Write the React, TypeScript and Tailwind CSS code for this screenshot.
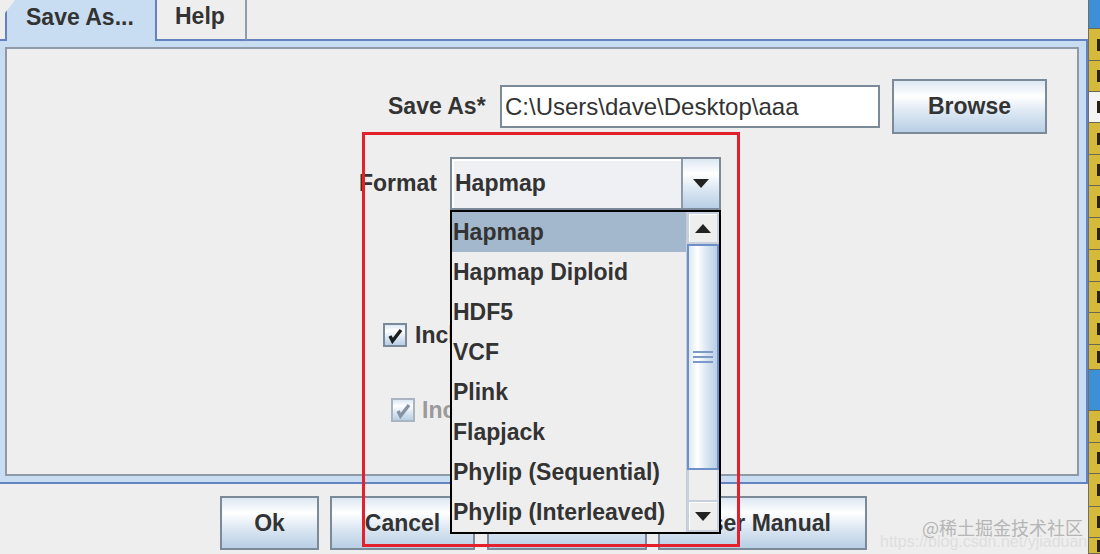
import React from "react";

// Java Swing "Ocean" look: grey window, blue-ish gradients, grey borders
const FONT = "[font-family:'Liberation_Sans',Arial,sans-serif]";
const BTN_BG =
  "bg-[linear-gradient(to_bottom,#dde8f3_0%,#ffffff_30%,#dde8f3_60%,#b8cfe5_100%)]";
const THUMB_BG =
  "bg-[linear-gradient(to_right,#dde8f3_0%,#ffffff_30%,#dde8f3_60%,#b8cfe5_100%)]";

const formats = [
  "Hapmap",
  "Hapmap Diploid",
  "HDF5",
  "VCF",
  "Plink",
  "Flapjack",
  "Phylip (Sequential)",
  "Phylip (Interleaved)",
];

// strip cells at the right edge: [height incl. divider, colour]
const stripCells: [number, string][] = [
  [29, "bg-[#3d8fd6]"],
  [32, "bg-[#d4b93b]"],
  [31, "bg-[#d4b93b]"],
  [31, "bg-[#f4f4f4]"],
  [32, "bg-[#d4b93b]"],
  [31, "bg-[#d4b93b]"],
  [32, "bg-[#d4b93b]"],
  [32, "bg-[#d4b93b]"],
  [32, "bg-[#d4b93b]"],
  [31, "bg-[#d4b93b]"],
  [32, "bg-[#d4b93b]"],
  [25, "bg-[#d4b93b]"],
  [41, "bg-[#3d8fd6]"],
  [32, "bg-[#d4b93b]"],
  [31, "bg-[#d4b93b]"],
  [33, "bg-[#d4b93b]"],
  [31, "bg-[#d4b93b]"],
  [16, "bg-[#d4b93b]"],
];

const Arrow = ({ up }: { up?: boolean }) => (
  <svg width="16" height="9" viewBox="0 0 16 9">
    <polygon
      points={up ? "0,9 16,9 8,0" : "0,0 16,0 8,9"}
      fill="#222222"
    />
  </svg>
);

const JButton = ({
  className,
  children,
}: {
  className: string;
  children?: React.ReactNode;
}) => (
  <div
    className={`${className} border-2 border-[#7a8a99] ${BTN_BG} flex items-center justify-center text-[23px] font-bold text-[#333333]`}
  >
    {children}
  </div>
);

const CheckBox = ({ disabled }: { disabled?: boolean }) => (
  <div
    className={`w-[24px] h-[24px] border-2 ${
      disabled ? "border-[#a9b4c0]" : "border-[#7a8a99]"
    } ${BTN_BG} flex items-center justify-center`}
  >
    <svg width="18" height="18" viewBox="0 0 18 18">
      <polyline
        points="4,10 6.5,15 15,4"
        fill="none"
        stroke={disabled ? "#8593a5" : "#1e1e1e"}
        strokeWidth="3.4"
      />
    </svg>
  </div>
);

export default function App() {
  return (
    <div
      className={`relative w-[1100px] h-[554px] overflow-hidden bg-[#eeeeee] flex ${FONT}`}
    >
      {/* main dialog */}
      <div className="w-[1088px] flex flex-col">
        {/* tabs */}
        <div className="h-[41px] flex">
          <div className="w-[5px] border-b-2 border-[#6382bf]" />
          <div className="w-[152px] h-full bg-[#c8ddf2] border-l-2 border-r-2 border-[#6382bf] [clip-path:polygon(10px_0,100%_0,100%_100%,0_100%,0_13px)] flex items-center pl-[19px] pb-[6px] text-[23px] font-bold text-[#333333]">
            Save As...
          </div>
          <div className="w-[90px] h-full border-r-2 border-r-[#8e9cab] border-b-2 border-b-[#6382bf] [clip-path:polygon(11px_0,100%_0,100%_100%,0_100%,0_7px)] flex items-center pl-[18px] pb-[6px] text-[23px] font-bold text-[#333333]">
            Help
          </div>
          <div className="flex-1 border-b-2 border-[#6382bf]" />
        </div>

        {/* tab content */}
        <div className="h-[443px] bg-[#c8ddf2] border-r-2 border-b-2 border-[#6382bf] pt-[6px] pb-[6px] pl-[5px] pr-[7px]">
          <div className="h-full border-2 border-[#8f9aa8] bg-[#eeeeee] flex flex-col">
            {/* Save As row */}
            <div className="mt-[30px] h-[55px] flex items-center pl-[381px]">
              <div className="w-[100px] text-[23px] font-bold text-[#333333] whitespace-nowrap">
                Save As*
              </div>
              <div className="ml-[12px] w-[380px] h-[43px] border-2 border-[#7a8a99] bg-white flex items-center pl-[3px] text-[24px] text-[#333333] whitespace-nowrap">
                C:\Users\dave\Desktop\aaa
              </div>
              <JButton className="ml-[12px] w-[155px] h-[55px]">Browse</JButton>
            </div>

            {/* Format row */}
            <div className="mt-[23px] h-[53px] flex items-center pl-[352px]">
              <div className="w-[79px] text-[23px] font-bold text-[#333333]">
                Format
              </div>
              <div className="ml-[12px] w-[271px] h-[53px] border-2 border-[#7a8a99] flex">
                <div className="flex-1 bg-[#eef0f3] shadow-[inset_2px_2px_0_#ffffff] flex items-center pl-[3px] text-[23px] font-bold text-[#333333]">
                  Hapmap
                </div>
                <div
                  className={`w-[38px] border-l-2 border-[#8f9aa8] ${BTN_BG} flex items-center justify-center`}
                >
                  <Arrow />
                </div>
              </div>
            </div>

            {/* checkboxes, labels run under the open popup */}
            <div className="mt-[113px] h-[24px] flex items-center pl-[376px]">
              <CheckBox />
              <div className="ml-[8px] w-[35px] overflow-hidden text-[23px] font-bold text-[#333333] whitespace-nowrap">
                Include Taxa Annotations
              </div>
            </div>
            <div className="mt-[51px] h-[24px] flex items-center pl-[384px]">
              <CheckBox disabled />
              <div className="ml-[7px] w-[28px] overflow-hidden text-[23px] font-bold text-[#9a9a9a] whitespace-nowrap">
                Include Depth
              </div>
            </div>
          </div>
        </div>

        {/* bottom buttons */}
        <div className="mt-[12px] h-[54px] flex pl-[220px]">
          <JButton className="w-[99px] h-[54px]">Ok</JButton>
          <JButton className="ml-[11px] w-[145px] h-[54px]">Cancel</JButton>
          <JButton className="ml-[12px] w-[160px] h-[54px]" />
          <JButton className="ml-[11px] w-[209px] h-[54px]">User Manual</JButton>
        </div>
      </div>

      {/* table edge peeking in on the right */}
      <div className="w-[12px] border-l border-[#6f6f6f] flex flex-col">
        {stripCells.map(([h, c], i) => (
          <div
            key={i}
            className={`${c} border-b border-[#6b6852] flex items-center justify-end shrink-0`}
            style={{ height: h }}
          >
            {c !== "bg-[#3d8fd6]" && (
              <div className="w-[3px] h-[12px] bg-[#2a2418]" />
            )}
          </div>
        ))}
      </div>

      {/* open combo popup */}
      <div className="absolute left-[450px] top-[210px] w-[271px] h-[324px] border-2 border-black bg-[#eeeeee] flex">
        <div className="w-[234px] flex flex-col">
          {formats.map((f, i) => (
            <div
              key={f}
              className={`h-[40px] shrink-0 flex items-center pl-[1px] text-[23px] font-bold text-[#333333] whitespace-nowrap ${
                i === 0 ? "bg-[#a3b8cc]" : ""
              }`}
            >
              {f}
            </div>
          ))}
        </div>
        <div className="w-[33px] flex flex-col border-l border-[#c3ccd8]">
          <div className="h-[32px] border-2 border-[#c7d0dc] shadow-[inset_1px_1px_0_#ffffff] flex items-center justify-center">
            <Arrow up />
          </div>
          <div
            className={`h-[226px] border-2 border-[#6f8fc9] ${THUMB_BG} flex flex-col items-center justify-center gap-[3px]`}
          >
            <div className="w-[20px] h-[2px] bg-[#7d99c8]" />
            <div className="w-[20px] h-[2px] bg-[#7d99c8]" />
            <div className="w-[20px] h-[2px] bg-[#7d99c8]" />
          </div>
          <div className="h-[30px] border-x-2 border-[#c7d0dc] bg-[#eeeeee]" />
          <div className="h-[32px] border-2 border-[#c7d0dc] shadow-[inset_1px_1px_0_#ffffff] flex items-center justify-center">
            <Arrow />
          </div>
        </div>
      </div>

      {/* red highlight frame */}
      <div className="absolute left-[362px] top-[132px] w-[378px] h-[415px] border-[3px] border-[#e3202b] pointer-events-none" />

      {/* watermark */}
      <div className="absolute left-[880px] top-[530px] text-[16px] text-[#dedede] whitespace-nowrap pointer-events-none">
        https://blog.csdn.net/yjiaduan
      </div>
      <div className="absolute left-[922px] top-[514px] text-[18px] text-[#b5b5b5] whitespace-nowrap pointer-events-none [font-family:'Noto_Sans_CJK_SC',sans-serif]">
        @稀土掘金技术社区
      </div>
    </div>
  );
}
